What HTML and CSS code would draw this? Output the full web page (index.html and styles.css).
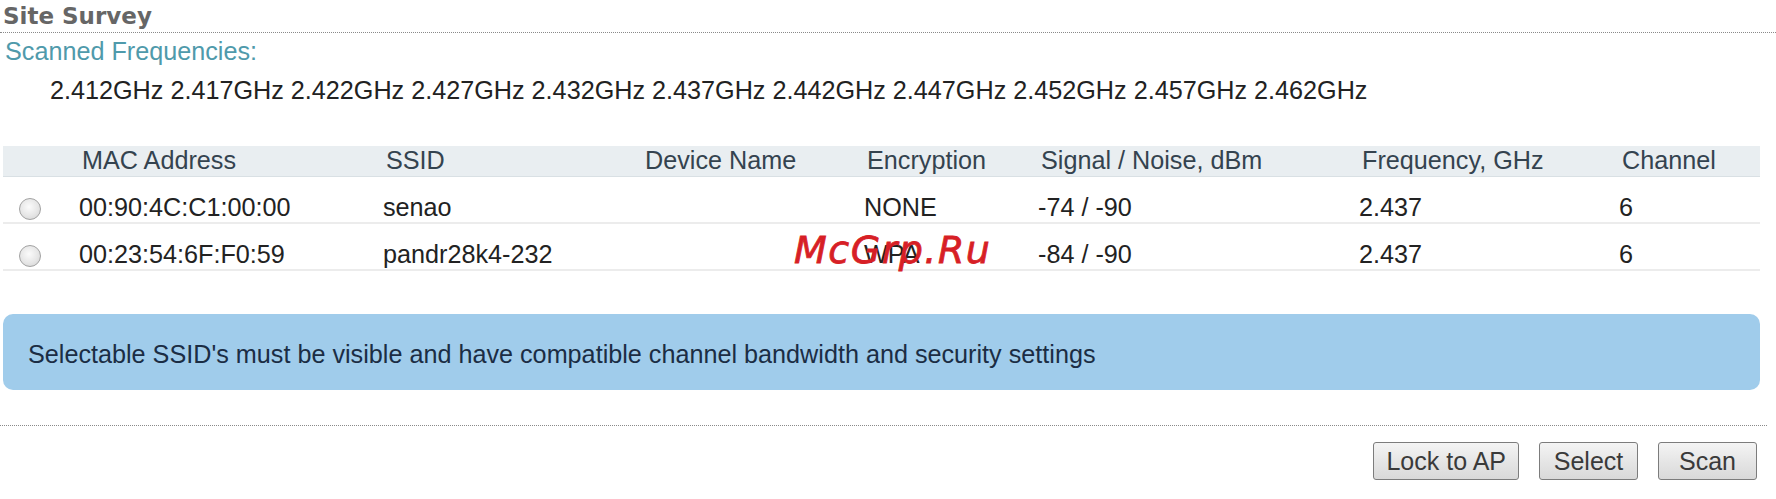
FILE: index.html
```html
<!DOCTYPE html>
<html lang="en">

<head>
    <meta charset="UTF-8">
    <meta name="viewport" content="width=device-width, initial-scale=1.0">
    <title>Site Survey</title>
    <link rel="stylesheet" href="styles.css">
</head>

<body>
    <div class="page">
        <div class="title">Site Survey</div>

        <div class="freqLabel">Scanned Frequencies:</div>
        <div class="freqList">2.412GHz 2.417GHz 2.422GHz 2.427GHz 2.432GHz 2.437GHz 2.442GHz 2.447GHz 2.452GHz 2.457GHz 2.462GHz</div>

        <table class="survey">
            <colgroup>
                <col style="width:76px">
                <col style="width:304px">
                <col style="width:259px">
                <col style="width:222px">
                <col style="width:174px">
                <col style="width:321px">
                <col style="width:260px">
                <col style="width:141px">
            </colgroup>
            <thead>
                <tr>
                    <th></th>
                    <th>MAC Address</th>
                    <th>SSID</th>
                    <th>Device Name</th>
                    <th>Encryption</th>
                    <th>Signal / Noise, dBm</th>
                    <th>Frequency, GHz</th>
                    <th>Channel</th>
                </tr>
            </thead>
            <tbody>
                <tr>
                    <td><input class="pick" type="radio" name="ap" value="1"></td>
                    <td>00:90:4C:C1:00:00</td>
                    <td>senao</td>
                    <td></td>
                    <td>NONE</td>
                    <td>-74 / -90</td>
                    <td>2.437</td>
                    <td>6</td>
                </tr>
                <tr>
                    <td><input class="pick" type="radio" name="ap" value="2"></td>
                    <td>00:23:54:6F:F0:59</td>
                    <td>pandr28k4-232</td>
                    <td></td>
                    <td class="hasMark">WPA<span class="watermark">McGrp.Ru</span></td>
                    <td>-84 / -90</td>
                    <td>2.437</td>
                    <td>6</td>
                </tr>
            </tbody>
        </table>

        <div class="note">Selectable SSID's must be visible and have compatible channel bandwidth and security settings</div>

        <div class="actions">
            <button>Lock to AP</button>
            <button>Select</button>
            <button>Scan</button>
        </div>
    </div>
</body>

</html>
```

FILE: styles.css
```css
body {
    margin: 0;
    background-color: white;
    font-family: "Liberation Sans", Arial, sans-serif;
    font-size: 25.2px;
    color: #222;
}

.page {
    width: 1776px;
}

.title {
    font-family: "DejaVu Sans", Verdana, sans-serif;
    font-weight: bold;
    font-size: 23px;
    line-height: 28px;
    color: #666;
    padding: 2px 0 2px 3px;
    border-bottom: 1px dotted #8a8a8a;
}

.freqLabel {
    margin-top: 4px;
    padding-left: 5px;
    line-height: 29px;
    color: #4f9aab;
}

.freqList {
    margin-top: 10px;
    padding-left: 50px;
    line-height: 29px;
    color: #222;
}

.survey {
    margin: 41px 0 0 3px;
    width: 1757px;
    table-layout: fixed;
    border-collapse: collapse;
}

.survey th {
    text-align: left;
    font-weight: normal;
    line-height: 29px;
    padding: 0 0 1px 3px;
    color: #34434f;
    background-color: #e9eef1;
    border-bottom: 1px solid #d9e0e4;
}

.survey td {
    line-height: 29px;
    padding: 16px 0 0 0;
    border-bottom: 2px solid #ececec;
    white-space: nowrap;
}

.pick {
    appearance: none;
    -webkit-appearance: none;
    width: 22px;
    height: 22px;
    margin: 0 0 0 16px;
    vertical-align: middle;
    border-radius: 50%;
    border: 1px solid #a3a3a3;
    background: radial-gradient(circle at 45% 40%, #fbfbfb 0%, #e6e6e6 55%, #cfcfcf 100%);
}

.hasMark {
    position: relative;
}

.watermark {
    position: absolute;
    left: -70px;
    top: 4px;
    font-family: "DejaVu Sans", Verdana, sans-serif;
    font-style: italic;
    font-size: 38px;
    line-height: 44px;
    letter-spacing: 1.5px;
    color: #d71f26;
    -webkit-text-stroke: 0.8px #d71f26;
}

.note {
    margin: 43px 16px 0 3px;
    height: 76px;
    box-sizing: border-box;
    padding: 26px 0 0 25px;
    line-height: 29px;
    border-radius: 10px;
    background-color: #a0cceb;
    color: #1b2d44;
}

.actions {
    margin-top: 35px;
    margin-right: 9px;
    border-top: 1px dotted #8a8a8a;
    padding: 16px 10px 0 0;
    display: flex;
    justify-content: flex-end;
    gap: 20px;
}

.actions button {
    height: 38px;
    min-width: 99px;
    padding: 0 12px;
    font-family: "Liberation Sans", Arial, sans-serif;
    font-size: 25px;
    color: #3a3a3a;
    border: 1px solid #7c7c7c;
    border-radius: 3px;
    background: linear-gradient(#f4f4f4, #e6e6e6 50%, #d9d9d9);
    cursor: pointer;
}
```
